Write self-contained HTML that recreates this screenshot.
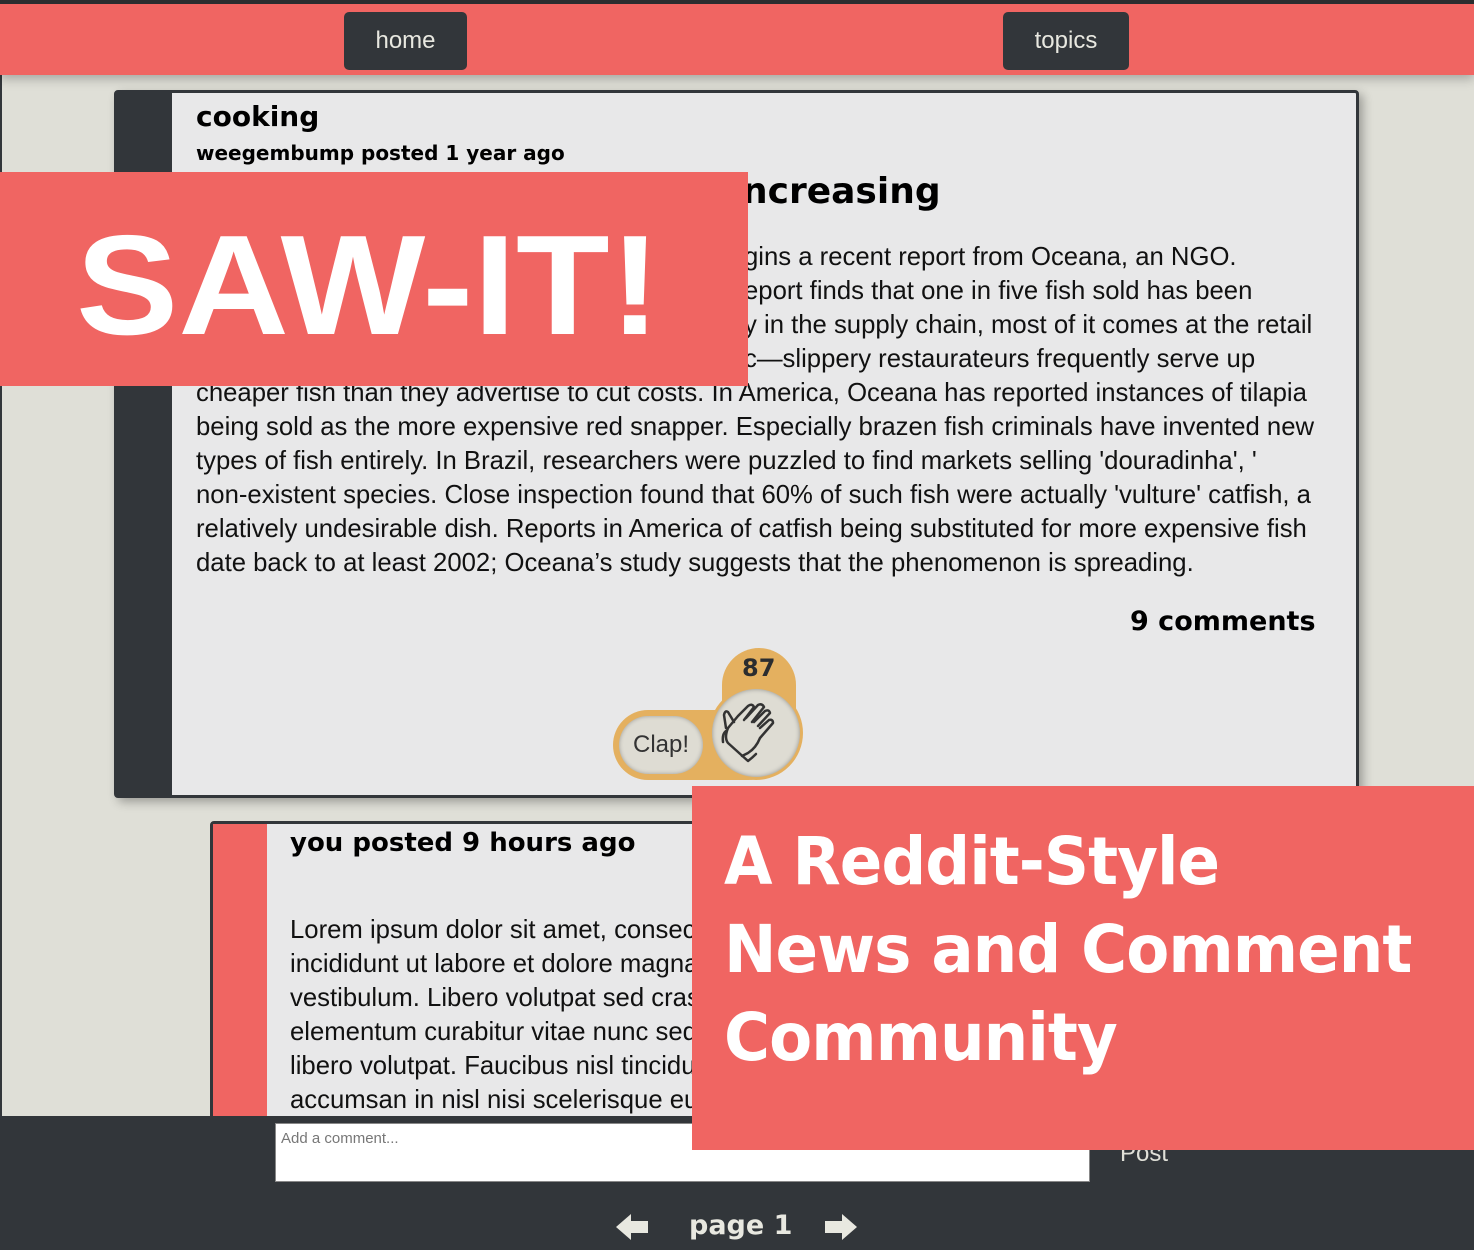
<!DOCTYPE html>
<html><head><meta charset="utf-8"><style>
*{margin:0;padding:0;box-sizing:border-box}
body{width:1474px;height:1250px;overflow:hidden;background:#dfdfd7;position:relative;font-family:"Liberation Sans",sans-serif}
.abs{position:absolute}
.nav{left:0;top:0;width:1474px;height:75px;background:#f06562;border-top:4px solid #2b2d2f;box-shadow:0 4px 10px rgba(0,0,0,.25)}
.btn{background:#32363a;color:#e8e8e0;border-radius:5px;font-size:24px;text-align:center;line-height:58px;top:12px;height:58px}
.card{background:#e8e8e9;border:3px solid #32363a;border-radius:4px;box-shadow:4px 4px 10px rgba(0,0,0,.3)}
.h{font-weight:900;color:#000;white-space:nowrap;font-family:"DejaVu Sans","Liberation Sans",sans-serif}
.body{font-size:25.7px;line-height:33.9px;color:#111;white-space:nowrap}
.coral{background:#f06562}
</style></head><body>
<div class="abs" style="left:0;top:0;width:2px;height:1250px;background:#32363a"></div>
<div class="abs nav"></div>
<div class="abs btn" style="left:344px;width:123px">home</div>
<div class="abs btn" style="left:1003px;width:126px">topics</div>

<div class="abs card" style="left:114px;top:90px;width:1245px;height:708px">
 <div class="abs" style="left:0;top:0;width:55px;height:702px;background:#32363a"></div>
</div>
<div class="abs h" style="left:196px;top:100px;font-size:28px">cooking</div>
<div class="abs h" style="left:196px;top:141px;font-size:20px">weegembump posted 1 year ago</div>
<div class="abs h" style="left:742px;top:171px;font-size:36px">ncreasing</div>
<div class="abs body" style="left:744px;top:241px">
gins a recent report from Oceana, an NGO.<br>
eport finds that one in five fish sold has been<br>
y in the supply chain, most of it comes at the retail<br>
c—slippery restaurateurs frequently serve up</div>
<div class="abs body" style="left:196px;top:377px">
cheaper fish than they advertise to cut costs. In America, Oceana has reported instances of tilapia<br>
being sold as the more expensive red snapper. Especially brazen fish criminals have invented new<br>
types of fish entirely. In Brazil, researchers were puzzled to find markets selling 'douradinha', '<br>
non-existent species. Close inspection found that 60% of such fish were actually 'vulture' catfish, a<br>
relatively undesirable dish. Reports in America of catfish being substituted for more expensive fish<br>
date back to at least 2002; Oceana’s study suggests that the phenomenon is spreading.</div>
<div class="abs h" style="left:1130px;top:606px;font-size:27px">9 comments</div>

<div class="abs" style="left:722px;top:648px;width:74px;height:80px;background:#e4b05f;border-radius:37px 37px 0 0"></div>
<div class="abs h" style="left:742px;top:654px;font-size:24px;color:#2b2d2f">87</div>
<div class="abs" style="left:613px;top:710px;width:170px;height:70px;background:#e4b05f;border-radius:35px"></div>
<div class="abs" style="left:619px;top:716px;width:84px;height:58px;background:#dedcd3;border-radius:29px;box-shadow:inset 0 0 4px rgba(0,0,0,.3);font-size:24px;color:#333;text-align:center;line-height:58px">Clap!</div>
<div class="abs" style="left:709px;top:686px;width:94px;height:94px;background:#e4b05f;border-radius:50%"></div>
<div class="abs" style="left:712px;top:689px;width:88px;height:88px;background:#dedcd3;border-radius:50%;box-shadow:inset 0 0 5px rgba(0,0,0,.35)"></div>
<svg class="abs" style="left:720px;top:698px" width="66" height="70" viewBox="0 0 66 70" fill="none" stroke="#333" stroke-width="2.5" stroke-linecap="round" stroke-linejoin="round">
<path d="M8 30 L18 18 L28 8 Q32 5 34 9 L24 22"/>
<path d="M26 20 L38 7 Q42 5 44 9 L32 24"/>
<path d="M34 24 L45 13 Q49 11 50 15 L38 28"/>
<path d="M40 30 L49 22 Q53 21 53 25 L40 40 Q36 50 28 55 L22 58"/>
<path d="M8 30 Q4 40 8 45 L28 63 Q32 60 36 56"/>
<path d="M14 24 L8 14 Q5 12 4 17 L6 30"/>
<path d="M3 44 Q2 36 6 33"/>
</svg>

<div class="abs coral" style="left:0;top:172px;width:748px;height:214px"></div>
<div class="abs" style="left:76px;top:204px;font-size:142px;font-weight:900;color:#fff;font-family:'Liberation Sans',sans-serif;transform:scaleX(1.08);transform-origin:left;white-space:nowrap">SAW-IT!</div>

<div class="abs card" style="left:210px;top:821px;width:500px;height:320px;box-shadow:none">
 <div class="abs" style="left:0;top:0;width:54px;height:320px;background:#f06562"></div>
</div>
<div class="abs h" style="left:290px;top:828px;font-size:26px">you posted 9 hours ago</div>
<div class="abs body" style="left:290px;top:914px">
Lorem ipsum dolor sit amet, consectetur<br>
incididunt ut labore et dolore magna<br>
vestibulum. Libero volutpat sed cras<br>
elementum curabitur vitae nunc sed<br>
libero volutpat. Faucibus nisl tincidunt<br>
accumsan in nisl nisi scelerisque eu</div>

<div class="abs" style="left:0;top:1116px;width:1474px;height:134px;background:#32363a"></div>
<div class="abs" style="left:275px;top:1123px;width:815px;height:59px;background:#fff;border:1px solid #888;font-size:15px;color:#777;padding:6px 5px">Add a comment...</div>
<div class="abs" style="left:1120px;top:1140px;font-size:24px;color:#e0e0d8">Post</div>
<div class="abs h" style="left:689px;top:1210px;font-size:27px;color:#e8e8e0">page 1</div>
<svg class="abs" style="left:616px;top:1213px" width="34" height="28" viewBox="0 0 34 28"><path d="M0 14 L15 1 L15 8 L32 8 L32 20 L15 20 L15 27 Z" fill="#e8e8e0"/></svg>
<svg class="abs" style="left:824px;top:1213px" width="34" height="28" viewBox="0 0 34 28"><path d="M33 14 L18 1 L18 8 L1 8 L1 20 L18 20 L18 27 Z" fill="#e8e8e0"/></svg>

<div class="abs coral" style="left:692px;top:786px;width:782px;height:364px"></div>
<div class="abs" style="left:724px;top:818px;font-size:66px;line-height:88px;font-weight:900;color:#fff;white-space:nowrap;font-family:'DejaVu Sans','Liberation Sans',sans-serif;letter-spacing:-1px;transform:scaleX(0.95);transform-origin:left">A Reddit-Style<br>News and Comment<br>Community</div>
</body></html>
